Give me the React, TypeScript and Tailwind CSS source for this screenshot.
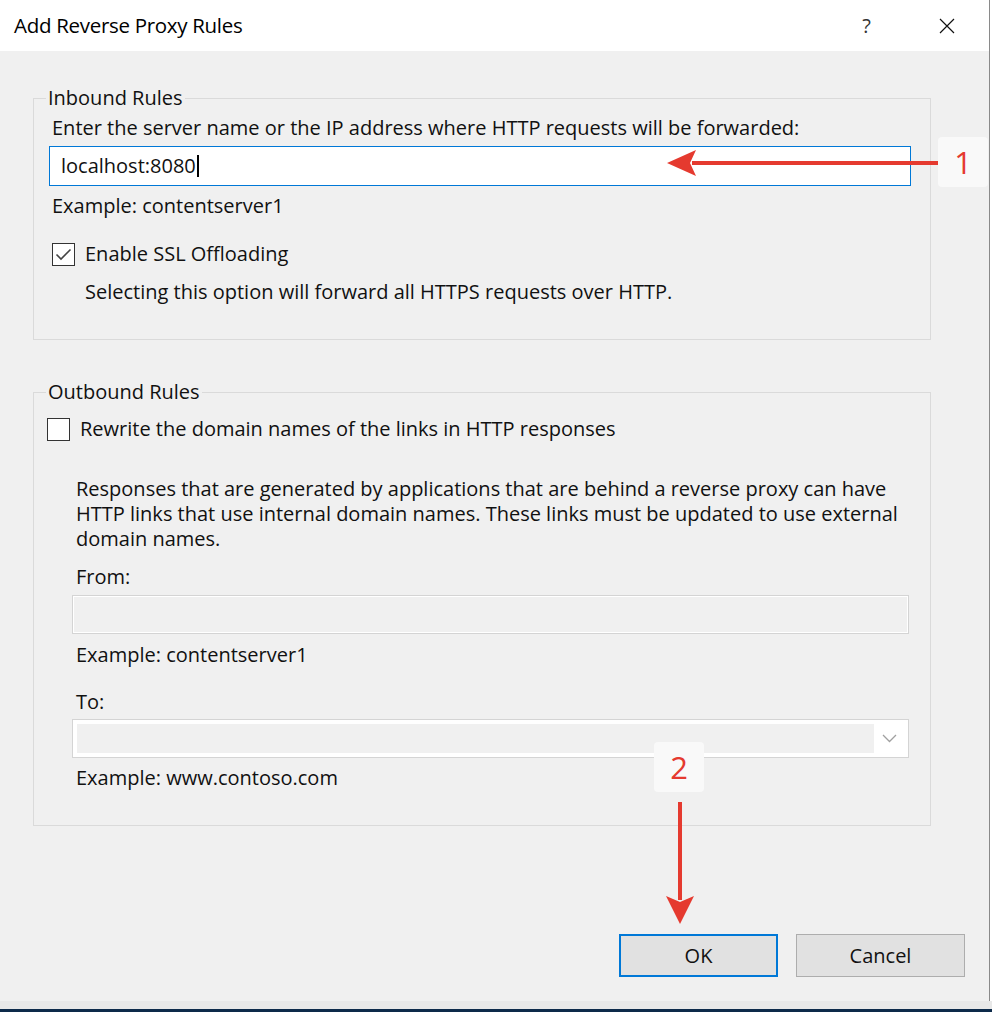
import React from "react";

const font = { fontFamily: '"Open Sans", "Noto Sans", sans-serif' };

function Checkbox({ checked }: { checked?: boolean }) {
  return (
    <span className="flex h-[23px] w-[23px] shrink-0 items-center justify-center border-[1.5px] border-[#333] bg-white">
      {checked && (
        <svg width="17" height="13" viewBox="0 0 17 13" fill="none">
          <path d="M1.5 6.5 L6 11 L15.5 1.5" stroke="#444" strokeWidth="1.6" />
        </svg>
      )}
    </span>
  );
}

function Annotation({ n }: { n: string }) {
  return (
    <div className="flex h-[50px] w-[50px] items-center justify-center rounded-[4px] bg-[#f9f9f9] text-[31px] leading-none text-[#e53a2f]">
      {n}
    </div>
  );
}

export default function App() {
  return (
    <div
      className="relative flex h-[1012px] w-[992px] flex-col overflow-hidden bg-white text-[20px] text-[#111]"
      style={font}
    >
      {/* title bar */}
      <div className="mr-[2px] flex h-[51px] shrink-0 items-center border-r border-[#8a8a8a] bg-white pl-[14px] pr-[34px]">
        <span className="text-[20.5px] tracking-[-0.3px] text-black">Add Reverse Proxy Rules</span>
        <span className="ml-auto mr-[68px] text-[20px] text-[#333]">?</span>
        <svg width="16" height="16" viewBox="0 0 16 16">
          <path d="M1 1 L15 15 M15 1 L1 15" stroke="#111" strokeWidth="1.2" />
        </svg>
      </div>

      {/* body */}
      <div className="mr-[2px] flex flex-1 flex-col border-r border-[#8a8a8a] bg-[#f0f0f0] pl-[33px] pr-[58px] pt-[35px]">
        <fieldset className="h-[254px] border border-[#dadada] px-[15px] pt-[6px]">
          <legend className="ml-[-3px] px-[2px] leading-[24px]">Inbound Rules</legend>
          <div className="ml-[3px] leading-[24px]">
            Enter the server name or the IP address where HTTP requests will be forwarded:
          </div>
          <div className="mt-[6px] flex h-[40px] w-[862px] items-center border border-[#0078d7] bg-white pl-[11px]">
            <span>localhost:8080</span>
            <span className="ml-[1px] h-[22px] w-[2px] bg-black" />
          </div>
          <div className="ml-[3px] mt-[8px] leading-[24px]">Example: contentserver1</div>
          <div className="ml-[3px] mt-[24px] flex items-center gap-[10px]">
            <Checkbox checked />
            <span className="leading-[24px]">Enable SSL Offloading</span>
          </div>
          <div className="ml-[36px] mt-[14px] leading-[24px]">
            Selecting this option will forward all HTTPS requests over HTTP.
          </div>
        </fieldset>

        <fieldset className="mt-[40px] h-[446px] border border-[#dadada] pl-[13px] pr-[21px] pt-[13px]">
          <legend className="ml-[-1px] px-[2px] leading-[24px]">Outbound Rules</legend>
          <div className="flex items-center gap-[10px]">
            <Checkbox />
            <span className="leading-[24px]">Rewrite the domain names of the links in HTTP responses</span>
          </div>
          <div className="ml-[29px]">
            <p className="mt-[35px] leading-[25px]">
              Responses that are generated by applications that are behind a reverse proxy can have
              HTTP links that use internal domain names. These links must be updated to use external
              domain names.
            </p>
            <div className="mt-[14px] leading-[24px]">From:</div>
            <div className="ml-[-4px] mt-[6px] h-[39px] border border-[#d4d4d4] bg-[#f0f0f0] shadow-[inset_0_0_0_1px_#ffffff]" />
            <div className="mt-[9px] leading-[24px]">Example: contentserver1</div>
            <div className="mt-[23px] leading-[24px]">To:</div>
            <div className="ml-[-4px] mt-[5px] flex h-[39px] items-center border border-[#d4d4d4] bg-white p-[4px]">
              <div className="h-full flex-1 bg-[#f0f0f0]" />
              <div className="flex w-[30px] justify-center">
                <svg width="15" height="9" viewBox="0 0 15 9">
                  <path d="M1 1 L7.5 7.5 L14 1" stroke="#a0a0a0" strokeWidth="1.3" fill="none" />
                </svg>
              </div>
            </div>
            <div className="mt-[8px] leading-[24px]">Example: www.contoso.com</div>
          </div>
        </fieldset>

        <div className="mr-[-34px] mt-[108px] flex justify-end gap-[18px]">
          <button className="h-[43px] w-[159px] border-2 border-[#0078d7] bg-[#e1e1e1] text-[20px]">OK</button>
          <button className="h-[43px] w-[169px] border border-[#adadad] bg-[#e1e1e1] text-[20px]">Cancel</button>
        </div>
      </div>

      <div className="h-[8px] shrink-0 bg-[#e8e8e8]" />
      <div className="h-[3px] shrink-0 bg-[#0d2a4a]" />

      {/* annotations */}
      <div className="absolute left-[938px] top-[137px]">
        <Annotation n="1" />
      </div>
      <svg className="absolute left-[664px] top-[148px]" width="276" height="30" viewBox="0 0 276 30">
        <path d="M274 15 L28 15" stroke="#e53a2f" strokeWidth="4" />
        <path d="M3 15 L32 2 L26 15 L32 28 Z" fill="#e53a2f" />
      </svg>
      <div className="absolute left-[654px] top-[742px]">
        <Annotation n="2" />
      </div>
      <svg className="absolute left-[665px] top-[800px]" width="30" height="126" viewBox="0 0 30 126">
        <path d="M15 2 L15 100" stroke="#e53a2f" strokeWidth="4" />
        <path d="M15 124 L1 96 L15 102 L29 96 Z" fill="#e53a2f" />
      </svg>
    </div>
  );
}
